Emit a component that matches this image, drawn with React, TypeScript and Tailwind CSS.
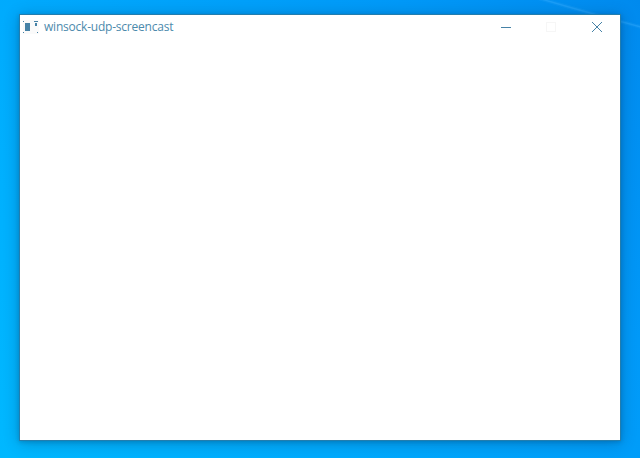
function Wallpaper() {
  return (
    <svg className="absolute inset-0 h-full w-full" viewBox="0 0 640 458" aria-hidden="true">
      <path
        d="M538 -2 Q585 12 641 27"
        fill="none"
        stroke="#2ca6fb"
        strokeOpacity="0.2"
        strokeWidth="4"
      />
      <path
        d="M538 -2 Q585 12 641 27"
        fill="none"
        stroke="#35adff"
        strokeOpacity="0.4"
        strokeWidth="1.5"
      />
    </svg>
  );
}

function AppIcon() {
  return (
    <svg className="h-[14px] w-4" viewBox="0 0 16 14" shapeRendering="crispEdges" aria-hidden="true">
      <path d="M0 0H16V14H0Z" fill="#fafafa" />
      <path
        d="M0 1h1v1H0zM2 3h5v8H2zM11 1h4v1h-4zM12 3h2v3h-2zM0 12h1v1H0zM14 12h1v1h-1z"
        fill="#4682a6"
      />
    </svg>
  );
}

function CaptionButtons() {
  return (
    <div className="flex">
      <button className="flex h-6 w-11 items-center justify-center" aria-label="Minimize">
        <svg className="h-[10px] w-[10px]" viewBox="0 0 10 10" shapeRendering="crispEdges">
          <path d="M0 5H10V6H0Z" fill="#4682a6" />
        </svg>
      </button>
      <button className="flex h-6 w-[46px] items-center justify-center" aria-label="Maximize" disabled>
        <svg className="h-[10px] w-[10px]" viewBox="0 0 10 10" shapeRendering="crispEdges">
          <path d="M.5 .5H9.5V9.5H.5Z" fill="none" stroke="#f6f6f6" />
        </svg>
      </button>
      <button className="flex h-6 w-[46px] items-center justify-center" aria-label="Close">
        <svg className="h-[10px] w-[10px]" viewBox="0 0 10 10">
          <path d="M0 0L10 10M10 0L0 10" fill="none" stroke="#4682a6" strokeWidth="1" />
        </svg>
      </button>
    </div>
  );
}

export default function App() {
  return (
    <main className="relative h-[458px] w-[640px] overflow-hidden bg-linear-[55deg,#00b8ff_0%,#00aafd_35%,#0099f8_75%,#008aee_100%] px-[19px] pt-[14px]">
      <Wallpaper />
      <section className="relative flex h-[427px] w-[602px] flex-col border border-[#237dad] bg-white shadow-[0_2px_14px_rgba(0,50,90,0.32),0_1px_4px_rgba(0,50,90,0.22)]">
        <header className="flex h-[30px] items-start justify-between">
          <div className="flex pt-[5px] pl-[3px]">
            <AppIcon />
            <h1 className="-mt-px ml-[5px] font-['Open_Sans','Noto_Sans',sans-serif] text-[12px] leading-[15px] tracking-[-0.22px] whitespace-nowrap text-[#4c8aac]">
              winsock-udp-screencast
            </h1>
          </div>
          <CaptionButtons />
        </header>
        <div className="flex-1 bg-white" />
      </section>
    </main>
  );
}
